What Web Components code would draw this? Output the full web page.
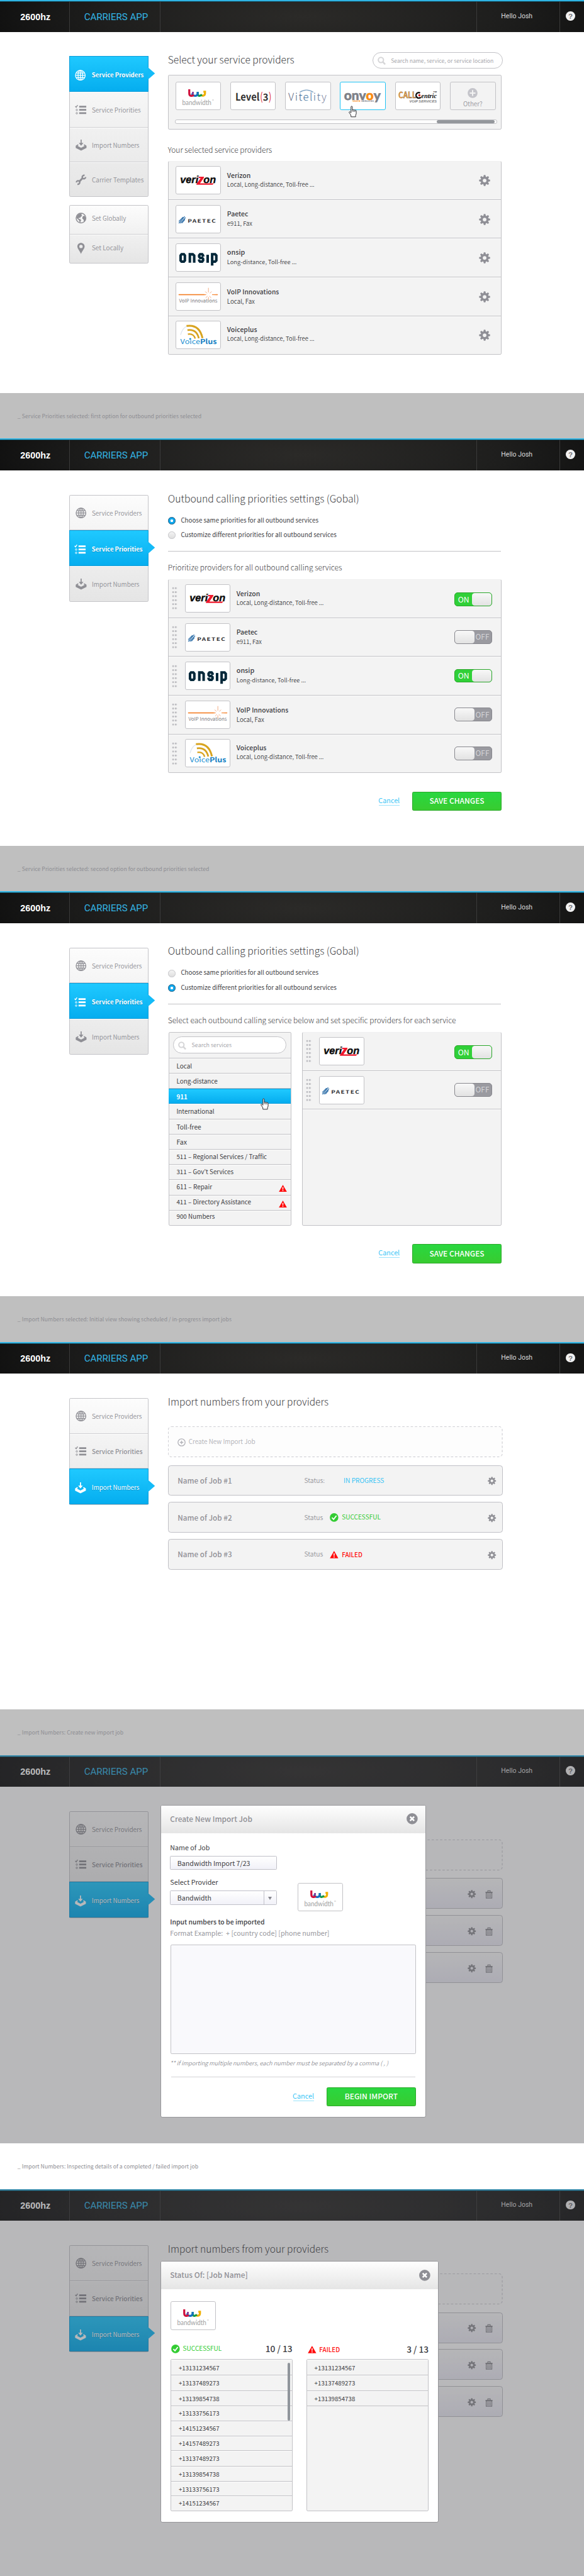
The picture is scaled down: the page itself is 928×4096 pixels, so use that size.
<!DOCTYPE html>
<html lang="en">
<head>
<meta charset="utf-8">
<title>2600hz Carriers App</title>
<style>
html{margin:0;background:#fff;overflow:hidden}
body{margin:0;width:928px;height:4096px;overflow:hidden;font:10px/20px "Noto Sans CJK SC","Noto Sans",sans-serif;color:#3c3c42;background:#fff}
</style>
</head>
<body>
<app-board></app-board>
<script>
const define = (name, render, setup) => customElements.define(name, class extends HTMLElement {
  connectedCallback() {
    if (this.shadowRoot) return;
    this.attachShadow({mode: 'open'}).innerHTML = render(n => this.getAttribute(n), this);
    if (setup) setup(this);
  }
});

/* A label set to a given width; its baseline is always 14.36px under its top. */
define('ui-text', a => `<style>
:host{display:block;flex:none;box-sizing:content-box;width:${a('w')}px;height:20px;font-size:10px;line-height:20px;white-space:nowrap;${a('b') ? `margin-top:${a('b') - 14.36}px;` : ''}}
span{display:inline-block;line-height:0;font-size:20px;margin-left:-.6px;${a('face') === 'h' ? 'font-family:"Liberation Sans",Arial,sans-serif' : a('face') === 'r' ? 'font-family:Roboto,"Liberation Sans",sans-serif' : ''}}
:host([u]) i{display:block;height:1.4px;background:#9be3fb;margin-top:-2.4px}
</style><span><slot></slot></span>${a('u') === null ? '' : '<i></i>'}`, el => {
  const s = el.shadowRoot.querySelector('span'), w = +el.getAttribute('w'), goal = w + 1.2;
  const now = () => s.getBoundingClientRect().width / el.getBoundingClientRect().width * w;
  s.style.fontSize = 20 * goal / now() + 'px';
  s.style.letterSpacing = (goal - now()) / el.textContent.length + 'px';
});
const T = (t, w, css = '', attrs = '') => `<ui-text w="${w}" style="${css}" ${attrs}>${t}</ui-text>`;

const ICONS = {
  globe: '<g fill="none" stroke="currentColor" stroke-width="1.9"><circle cx="13" cy="13" r="11.600"/><ellipse cx="13" cy="13" rx="5.500" ry="11.600"/><path d="M13 2v22M2 13h22M3.500 7.500h19M3.500 18.500h19"/></g>',
  list: '<g fill="currentColor"><path d="M8.700 3.400H25.500v4H8.700zM8.700 11H25.500v4H8.700zM8.700 18.800H25.500v4H8.700z"/></g><g fill="none" stroke="currentColor" stroke-width="1.300"><path d="M-.6 4.200l2.200 2.600L5 1.600" stroke-width="2"/><circle cx="3" cy="13.200" r="1.900"/><circle cx="3" cy="21" r="1.900"/></g>',
  import: '<path fill="currentColor" d="M12 0h2.600v8h4.200L13.300 14.400 7.800 8H12zM5.500 11.300L.5 14.500v5.200L13.300 26l12.800-6.300v-5.200l-5-3.200-1.900 1.900 2.600 1.900-8.500 4.400-8.500-4.400 2.600-1.900z"/>',
  wrench: '<path fill="none" stroke="currentColor" stroke-width="4.600" d="M8.500 18L17.500 8.500"/><path fill="none" stroke="currentColor" stroke-width="3.600" d="M21.500 2.200c-3.500.2-6 2.500-5.500 5.300.3 2.300 2.500 3.700 4.600 3.300 2-.4 3.200-1.600 3.500-3.800M4.500 24c3.400 0 5.800-2.400 5.400-5.200-.4-2.300-2.500-3.600-4.600-3.200-2 .4-3 1.700-3.300 3.800"/>',
  earth: '<circle cx="13" cy="13" r="11.600" fill="none" stroke="currentColor" stroke-width="2.200"/><path fill="currentColor" d="M4.500 6.500C8 2 13 2 15.500 3l-2 2.500 2.500 1.300-2.500 3-2.200 1 .4 2.700-3.500-1.500-1 2.500 3.500.7 3 2.800-1.700 2.700-.7 3.500c-2-1.500-2.300-3.500-3-6L4 14.500l-2-3zM17 9.500l4-2.500 3 5-.7 6-3 3.500-1.500-5-3-2.500z"/>',
  pin: '<path fill="currentColor" fill-rule="evenodd" d="M13 .2c-4.800 0-8.600 3.600-8.600 8.300C4.400 14 9.500 18 13 26.500 16.500 18 21.600 14 21.600 8.500c0-4.700-3.800-8.300-8.600-8.300zm0 4.600a4 4 0 1 1 0 8 4 4 0 0 1 0-8z"/>',
  gear: `<g fill="currentColor">${[0, 45, 90, 135].map(r => `<path transform="rotate(${r} 13 13)" d="M9.800 6l1.400-5.500h3.600L16.200 6zM9.800 20l1.400 5.500h3.600L16.200 20z"/>`).join('')}</g><circle cx="13" cy="13" r="6.500" fill="none" stroke="currentColor" stroke-width="4.600"/>`,
  trash: '<path fill="none" stroke="currentColor" stroke-width="2.400" d="M9.500 6V2.500h7V6M4.800 9h16.400v15.300H4.800z"/><path fill="currentColor" d="M2.800 5.500h20.400v3.800H2.800zM8 11.500h2V22H8zM12 11.500h2V22h-2zM16 11.500h2V22h-2z"/>',
  search: '<g fill="none" stroke="currentColor"><circle cx="10.500" cy="10.500" r="8.200" stroke-width="4"/><path d="M16.500 16.500l7.500 8" stroke-width="5"/></g>',
  close: '<circle cx="13" cy="13" r="12.900" fill="currentColor"/><path d="M8.300 8.300l9.400 9.400M17.700 8.300l-9.400 9.400" stroke="#fff" stroke-width="3.800"/>',
  check: '<circle cx="13" cy="13" r="12.800" fill="#33cc33"/><path d="M6.500 13.500l5 5 8.500-11" fill="none" stroke="#fff" stroke-width="3.400"/>',
  warn: '<path d="M13 2l12.600 22H.4z" fill="#ff0a0a"/><path d="M11.300 9.500h3.400l-.6 7.500h-2.200zM11.500 18.500h3v3h-3z" fill="#fff"/>',
  plus: '<circle cx="13" cy="13" r="12.800" fill="currentColor"/><path d="M13 5.500v15M5.500 13h15" stroke="#f3f3f3" stroke-width="3.200"/>',
  addring: '<circle cx="13" cy="13" r="11.300" fill="none" stroke="currentColor" stroke-width="2.600"/><path d="M13 7.500v11M7.500 13h11" stroke="currentColor" stroke-width="2.600"/>',
  hand: '<path fill="#fff" stroke="#222226" stroke-width="1.300" stroke-linejoin="round" d="M8.200 25L7.800 21 4 15.500c-1-1.500 1-2.700 2.200-1.500l1.900 2V2.800c0-2.100 3-2.100 3 0V10c0-1.500 2.800-1.500 2.900.2 0-1.400 2.700-1.300 2.900.5.300-1.200 2.900-1 2.900 1v6.500L18.400 21.500V25z"/><path d="M11.100 10v3.500M14 10.500V14M16.900 11v3.200" stroke="#222226" stroke-width="1.100"/>'
};
define('app-icon', a => `<style>:host{display:block;flex:none;width:${a('size') || 26}px;height:${a('size') || 26}px}svg{display:block;width:100%;height:100%;overflow:visible}</style><svg viewBox="0 0 26 26">${ICONS[a('name')]}</svg>`);
const I = (n, size = 26, css = '') => `<app-icon name="${n}" size="${size}" style="${css}"></app-icon>`;

const st = (x, y, w, size, fill, extra, t) => `<text x="${x}" y="${y}" textLength="${w}" lengthAdjust="spacingAndGlyphs" font-size="${size}" fill="${fill}" ${extra}>${t}</text>`;
const LOGOS = {
  bandwidth: `<g fill="none" stroke-width="4.400"><path d="M61 22h3.500v3c0 5.500-6 7.500-9.500 3.500" stroke="#f0b000"/><path d="M48.500 22v3c0 7.500 6 7 9 3" stroke="#159a48"/><path d="M36 25.500c1 5 5 5.500 7.500 5.300 3.500-.3 5-3.300 5-6V22" stroke="#1470c0"/><path d="M38 22v5" stroke="#7a2a90" stroke-width="3.600"/><path d="M30 16.500v9c0 7 7.500 6.500 9.500 3" stroke="#d0103c"/></g>` + st(14.5, 51, 64, 16, '#a0a0a0', 'font-family="Lato"', 'bandwidth') + '<path d="M80 40h4" stroke="#aaa"/>',
  level3: st(11, 41, 53, 23, '#303030', 'font-weight="700"', 'Level') + st(65, 42, 6, 24, '#e03038', '', '(') + st(71.5, 41, 12, 21, '#303030', 'font-weight="700"', '3') + st(84, 42, 6, 24, '#e03038', '', ')'),
  vitelity: st(7, 41, 86, 23, 'url(#v)', 'font-weight="300" letter-spacing="2"', 'Vitelity') + '<path d="M32 23q15-10 30 0" fill="none" stroke="#7fa3c4" stroke-width="1.800"/>',
  onvoy: st(8, 39.800, 80, 29, '#7d8088', 'font-weight="900" font-family="Lato" stroke="#7d8088" stroke-width=".8"', 'onv<tspan fill="#f98b10" stroke="#f98b10">o</tspan>y') + st(26.5, 44.300, 47, 4.600, '#7d8088', 'font-weight="700"', '<tspan fill="#f98b10">VOICE</tspan> SERVICES'),
  callcentric: st(7, 36.500, 39, 19, '#f0a040', 'font-weight="700" stroke="#555" stroke-width=".5"', 'CALL') + '<path d="M54.500 24.500a6 6 0 1 0 1.500 9.500" fill="none" stroke="#111" stroke-width="3.200"/><circle cx="53" cy="29.800" r="2.400" fill="#d01818"/>' + st(57, 36.300, 34, 15, '#111', 'font-weight="700" font-style="italic" font-family="Liberation Serif"', 'entric') + st(31, 46, 60, 7.500, '#77777a', 'font-weight="700" font-style="italic" font-family="Liberation Sans"', 'VOIP SERVICES') + st(83, 23, 8, 4, '#222', 'font-weight="700" font-family="Liberation Sans"', 'TM'),
  verizon: st(10, 36.700, 78.500, 22.500, '#0a0a0a', 'font-weight="700" font-style="italic" font-family="Liberation Sans" stroke="#0a0a0a" stroke-width=".5"', 'veri<tspan fill="none" stroke="none">z</tspan>on') + '<path d="M51 23.500H62.500l-1 3L53.500 38H84l-3 3H45.500l1-3 8.500-11.500h-5z" fill="#f0182c"/>',
  paetec: '<path d="M7 36l9.500-9.500M7.200 40L20 25M10.500 40L22 27.500M14 39.500l6.500-8" stroke="#2d6ea8" stroke-width="1.700"/>' + st(26.500, 38.500, 63.500, 10.500, '#2c2c30', 'font-weight="700" letter-spacing="1.500"', 'PAETEC'),
  onsip: '<g fill="none" stroke="#04283a" stroke-width="5.600"><path d="M11 26.500l2.200-2.700h5l2.200 2.700v11L18.200 40h-5L11 37.500z"/><path d="M31.300 42.500V24h6.500l3 2.700v15.800"/><path d="M60.300 29v-2.500l-2-2.700h-4.600l-2 2.500v3l2 2.300h4.600l2 2.400v3.300l-2 2.700h-4.600l-2-2.500V35"/><path d="M70.300 42.500V25"/><path d="M80.200 48.600V23.800h6.500l2.600 2.700v11L86.800 40h-6"/></g>',
  voip: st(7.5, 44.300, 84, 11, '#707074', 'font-weight="350"', 'VoIP Innovations') + '<path d="M7 26.300h55l5 .7-5 .7H7z" fill="#f47b20" stroke="#f47b20" stroke-width=".8"/><path d="M80 27l12-.6v1.200z" fill="#f47b20" stroke="#f47b20"/><path d="M72 12v10M72 32v7M65 20l4 4M79 20l-4 4M66 34l4-4M78 34l-4-4" stroke="#f4a070" stroke-width="1.200"/>',
  voiceplus: '<g fill="none"><path d="M11 31Q15 16 25 12" stroke="#dfe7ef" stroke-width="2"/><path d="M24 11.500Q52 7 59 38" stroke="#d8a420" stroke-width="4.200"/><path d="M26 20.500Q46 17.500 51 38.500" stroke="#d8a420" stroke-width="3.800"/><path d="M27 29.500Q39 27 43 39" stroke="#d8a420" stroke-width="3.200"/></g><circle cx="32" cy="40" r="2" fill="#1a8fd0"/>' + st(10.500, 51.500, 80, 15, '#1a90d2', '', 'Voice<tspan font-weight="700" fill="#1280c4">Plus</tspan>')
};
define('provider-logo', a => `<style>:host{display:block;flex:none;box-sizing:border-box;width:100px;height:62.500px;border:1px solid #c2c2c6;border-radius:4px;background:#fff;position:relative}
:host([hot]){border-color:#1fc3f5}svg{position:absolute;left:-1px;top:-1px;width:100px;height:62.500px;overflow:visible}text{font-family:"Noto Sans CJK SC",sans-serif;text-rendering:geometricPrecision}</style>
<svg viewBox="0 0 100 62.500"><defs><linearGradient id="v"><stop stop-color="#6a6a7e"/><stop offset=".45" stop-color="#2f6698"/><stop offset="1" stop-color="#8a8aa0"/></linearGradient></defs>${LOGOS[a('name')].replace(/ font-family="(\w+) ?(\w*)"/g, (m, p, q) => ` style="font-family:'${(p + ' ' + q).trim()}'"`)}</svg><slot></slot>`);
const L = (n, css = '', attr = '', inner = '') => `<provider-logo name="${n}" style="${css}" ${attr}>${inner}</provider-logo>`;

define('app-header', a => `<style>
:host{display:grid;grid-template-columns:153px 198.500px 1fr 181px 53px;height:70px;box-sizing:border-box;border-top:3px solid #2fb4e4;
background:radial-gradient(ellipse 62% 260% at 52% 50%,#2b2a28,#1e1e1d 55%,#0b0b0b)}
div{border-right:1px solid #3a3a3a;box-shadow:inset 0 1px #0f4f63;display:flex;align-items:flex-start;color:#fff}
div:first-child{margin-bottom:2px}div:last-child{border:0}
b{display:block;width:20.500px;height:20.500px;border-radius:50%;background:#f2f2f2;margin:22px 0 0 13px;text-align:center;font:700 16px/21px "Liberation Sans",sans-serif;color:#77777c}
</style><div>${T('2600hz', 65, 'font-weight:700;margin-left:45px', 'face="h" b="41.300"')}</div>
<div>${T('CARRIERS APP', 139, 'color:#33b5e5;font-weight:400;margin-left:32px', 'face="r" b="41.300"')}</div><div></div>
<div>${T('Hello Josh', 67.5, 'color:#dadada;font-weight:400;margin-left:53px', 'face="r" b="37.300"')}</div><div><b>?</b></div>`);

define('side-item', a => `<style>
:host{display:flex;align-items:flex-start;position:relative;box-sizing:border-box;height:${a('h')}px;color:#8f8f95;box-shadow:inset 0 1px #fff;border-bottom:1px solid #cfcfd2}
:host(:last-child){border-bottom:0}:host(:first-child){box-shadow:none}
:host([active]){color:#fff;background:linear-gradient(#1fc9ff,#05adef);border:1px solid #0e9cd8;box-shadow:none;margin:0 -1px;z-index:1}
:host([active]) ui-text{text-shadow:0 1px #0b90c8}
svg{position:absolute;left:100%;top:50%;margin:-15px 0 0 -.5px;width:16px;height:27px}
</style>${I(a('icon'), 24, `margin:${a('b') - 18}px 13px 0 ${a('active') === null ? 11.5 : 11}px`)}${T(a('label'), a('w'), `margin-top:${a('b') - 14.36}px;font-weight:${a('wt') || 350}`)}
${a('active') === null ? '' : '<svg viewBox="0 0 16 27"><path d="M0 0L15.500 13.500 0 27z" fill="#14bbf8"/></svg>'}`);
define('side-menu', () => `<style>:host{display:block;box-sizing:border-box;width:174px;border:1px solid #c4c4c8;border-radius:3px;background:linear-gradient(#fcfcfc,#e5e5e5)}div{margin:-1px 0}</style><div><slot></slot></div>`);
const item = (icon, label, w, h, b, extra = '') => `<side-item icon="${icon}" label="${label}" w="${w}" h="${h}" b="${b}" ${extra}></side-item>`;
const menuA = active => `<side-menu>
${item('globe', 'Service Providers', 108.5, active === 2 ? 78 : 79, 46)}
${item('list', 'Service Priorities', 110, active === 2 ? 78 : 76, active === 2 ? 46 : 44.3, active === 2 ? 'active wt="700"' : 'wt="500"')}
${item('import', 'Import Numbers', 103, 78.5, 46, active === 3 ? 'active wt="400"' : '')}</side-menu>`;

define('on-off', a => `<style>
:host{display:flex;flex:none;box-sizing:border-box;width:82px;height:30px;border:1px solid #2aa52a;border-radius:7px;background:#30d038;color:#fff}
:host([off]){background:#9a9aa0;border-color:#88888e;color:#d4d4d8;flex-direction:row-reverse}
i{display:block;width:42px;border-radius:6px;background:linear-gradient(#f8f8f8,#e2e2e2);margin-left:auto}
:host([off]) i{margin:0 auto 0 0}
</style>${a('off') === null ? T('ON', 23.5, 'margin-left:7px', 'b="20.500"') : T('OFF', 29, 'margin-right:5px', 'b="20.500"')}<i></i>`);

define('drag-dots', () => `<style>:host{display:block;flex:none;width:11.600px;height:52.800px;background:radial-gradient(circle,#bebec2 1.900px,transparent 2.500px) 0 0/5.800px 8.800px repeat}</style>`);

const P = [['verizon', 'Verizon', 50.5, 'Local, Long-distance, Toll-free ...', 190, 11, 37], ['paetec', 'Paetec', 45, 'e911, Fax', 54, 11, 37.3],
  ['onsip', 'onsip', 38, 'Long-distance, Toll-free ...', 151, 10, 36.3], ['voip', 'VoIP Innovations', 112.5, 'Local, Fax', 59.5, 11, 38], ['voiceplus', 'Voiceplus', 64.5, 'Local, Long-distance, Toll-free ...', 190, 10, 35]];
define('provider-row', a => {
  const [k, n, w, s, sw, ty, b] = P[+a('p')], mode = a('toggle');
  return `<style>:host{display:flex;align-items:flex-start;box-sizing:border-box;height:85px;border-bottom:1px solid #c2c2c6;box-shadow:inset 0 1px #fff}
:host([last]){border-bottom:0}.t{margin-left:14px}app-icon{margin:30px 24px 0 auto;color:#8f8f96}on-off{margin-left:auto;margin-right:20px}.g{width:14.500px}drag-dots{margin:15.500px 14.500px 0 7px}</style>
${mode === null ? '<i class="g"></i>' : '<drag-dots></drag-dots>'}
${L(k, `margin:${ty}px 0 0 ${mode === null ? 0 : 2}px`)}
${a('bare') === null ? `<div class="t">${T(n, w, `font-weight:500;margin-top:${b - 14.36}px`)}${T(s, sw, 'font-weight:350')}</div>` : ''}
${mode === null ? I('gear', 25) : `<on-off ${mode === 'off' ? 'off' : ''} style="margin-top:${+a('p') === 0 ? 29 : 26.500}px"></on-off>`}`;
});
define('ui-panel', () => `<style>:host{display:block;box-sizing:border-box;border:1px solid #c2c2c6;border-radius:3px;background:#f3f3f3}div{margin:-1px 0}</style><div><slot></slot></div>`);

define('search-box', a => `<style>:host{display:flex;flex:none;box-sizing:border-box;height:37px;border:1px solid #c2c2c6;border-radius:19px;background:#fff;color:#a6a6ab}app-icon{color:#d6d6d8;margin:9px 12px 0 10px}</style>${I('search', 18)}${T(a('label'), a('w'), '', 'b="22.700"')}`);

define('green-button', a => `<style>:host{display:flex;flex:none;box-sizing:border-box;width:196px;height:42px;border:1px solid #2aa828;border-radius:3px;background:linear-gradient(#29d740,#38cc30);color:#fff;justify-content:center}</style>${T(a('label'), a('w'), 'font-weight:500', 'b="26"')}`);
define('action-bar', a => `<style>:host{display:flex;justify-content:flex-end}green-button{margin-left:28px}</style>${T('Cancel', 45.5, 'color:#1fc0f5;font-weight:350', `u b="${a('b')}"`)}<green-button label="${a('label')}" w="${a('w')}"></green-button>`);

define('radio-row', a => `<style>:host{display:flex;height:32px}i{display:block;box-sizing:border-box;width:16px;height:16px;border-radius:50%;border:1px solid #c4c4c8;background:linear-gradient(#f4f4f4,#dedede);margin-right:12.500px}
:host([on]) i{border:1px solid #14567a;background:radial-gradient(circle,#fff 2.600px,#0fa8ee 3.400px)}</style><i></i>${T(a('label'), a('w'), '', 'b="12.300"')}`);
define('settings-head', a => `<style>:host{display:block}.r{margin-top:26.200px}hr{border:0;height:1px;background:#c2c2c6;margin:10.500px 2px 0 0}</style>
${T('Outbound calling priorities settings (Gobal)', 418, 'font-weight:300', 'b="70"')}
<div class="r"><radio-row label="Choose same priorities for all outbound services" w="300.500" ${a('pick') === '1' ? 'on' : ''}></radio-row><radio-row label="Customize different priorities for all outbound services" w="340" ${a('pick') === '2' ? 'on' : ''}></radio-row></div><hr>`);

define('status-mark', a => `<style>:host{display:flex;align-items:flex-start}app-icon{margin-right:7.500px}</style>${a('kind') === 'ok' ? I('check', 19) + T('SUCCESSFUL', 84, 'color:#33cc33;font-weight:400', 'b="15"') : I('warn', 19, 'margin-top:-1px') + T('FAILED', 44, 'color:#ff0a0a;font-weight:500', 'b="14.500"')}`);

define('new-job', a => `<style>:host{display:flex;position:relative;box-sizing:border-box;width:733px;height:67.500px;border-radius:7px;color:#b0b0b6;background:#fdfdfd}svg{position:absolute;inset:0;width:733px;height:67.500px}app-icon{margin:25.500px 7px 0 20.500px}</style>
<svg><rect x=".5" y=".5" width="732" height="66.500" rx="7" fill="none" stroke="#c0c0c6" stroke-width="1.200" stroke-dasharray="5 4.200"/></svg>${a('blank') === null ? I('addring', 18) + T('Create New Import Job', 145, 'font-weight:350', 'b="39.500"') : ''}`);
define('job-card', a => {
  const n = +a('n'), dy = n === 1 ? 0 : -1, bin = a('bin') !== null;
  return `<style>:host{display:flex;align-items:flex-start;box-sizing:border-box;width:733px;height:67.500px;margin-top:13.700px;border:1px solid #c0c0c6;border-radius:6px;background:#f3f3f3;color:#919197}
:host([bin]){background:linear-gradient(#fbfbfb,#edecf6)}.n{box-sizing:border-box;width:297.500px;padding-left:20px}.s{width:${n === 1 ? 86.5 : 56}px}.g{margin:24px 13px 0 auto}:host([bin]) .g{margin:24px 18px 0 auto;display:flex;gap:19px}status-mark{margin-top:${n === 2 ? 22.7 : 24}px}</style>
${bin ? '' : `<div class="n">${T('Name of Job #' + n, 118, 'font-weight:500;margin-top:' + (40.5 + dy - 14.36) + 'px')}</div>
<div class="s">${T(n === 1 ? 'Status:' : 'Status', n === 1 ? 44 : 40, 'font-weight:350;margin-top:' + (38 - 14.36) + 'px')}</div>
${n === 1 ? T('IN PROGRESS', 87.5, 'color:#1fc0f5;font-weight:350', 'b="38"') : `<status-mark kind="${n === 2 ? 'ok' : 'bad'}"></status-mark>`}`}
<div class="g">${I('gear', 18.5)}${bin ? I('trash', 19.5) : ''}</div>`;
});

define('ui-dialog', a => `<style>
:host{display:block;position:absolute;left:352px;box-sizing:border-box;width:${a('w')}px;height:${a('h')}px;top:${a('y')}px;border:1px solid #96969a;border-radius:4px;background:#fff;overflow:hidden}
header{display:flex;height:61px;background:linear-gradient(#fefefe,#e5e5e5);color:#8f8f95;justify-content:space-between;padding:0 17.500px 0 20px}app-icon{margin-top:17.500px}section{padding:0 20px}</style>
<header>${T(a('label'), a('lw'), 'font-weight:500', 'b="36.700"')}${I('close', 24.5)}</header><section><slot></slot></section>`);

define('field-box', a => `<style>:host{display:flex;box-sizing:border-box;width:234.500px;height:30.500px;border:1px solid #c0c0c8;border-radius:2px;background:linear-gradient(#fff,#f1f1f8);margin-left:-.500px}i{display:block;margin-left:auto;width:26px;border-left:1px solid #c0c0c8}i:after{content:"";display:block;width:0;height:0;margin:12px 0 0 8px;border:4.500px solid transparent;border-top:7px solid #85858c;border-bottom:0}</style>
${T(a('value'), a('vw'), 'margin-left:15px', 'b="20.200"')}${a('pick') === null ? '' : '<i></i>'}`);

define('number-list', a => {
  const rows = a('rows').split(' ').map(r => r.split(':'));
  return `<style>:host{display:block;position:relative;box-sizing:border-box;width:268px;height:333px;border:1px solid #c2c2c6;border-radius:3px;background:#f3f3f3}
div{box-sizing:border-box;border-bottom:1px solid #c2c2c6;box-shadow:inset 0 1px #fff;padding-left:17px;display:flex}div:first-of-type{margin-top:-1px}div:nth-of-type(10){border:0}
i{position:absolute;right:4px;top:6px;width:6.500px;height:127px;border-radius:3px;background:#90959b}</style>
${rows.map(([t, h, b]) => `<div style="height:${h}px">${T(t, 88, '', `b="${b}"`)}</div>`).join('')}${a('bar') === null ? '' : '<i></i>'}`;
});

define('service-list', () => {
  const rows = [['Local', 33, 33, 22.7], ['Long-distance', 89, 33.5, 23], ['911', 23, 34, 22.5], ['International', 82, 33.5, 22.3], ['Toll-free', 53, 33, 22.6], ['Fax', 22, 33, 22.6], ['511 – Regional Services / Traffic', 197, 34, 21.6], ['311 – Gov’t Services', 124, 33, 20.7], ['611 – Repair', 77, 34, 21.7], ['411 – Directory Assistance', 162.5, 33, 20.7], ['900 Numbers', 83, 33, 18.6]];
  return `<style>:host{display:block}.q{height:57.300px;box-sizing:border-box;padding:10px 8.500px;border-bottom:1px solid #c2c2c6}
.r{display:flex;position:relative;box-sizing:border-box;border-bottom:1px solid #c2c2c6;box-shadow:inset 0 1px #fff;padding-left:16.500px}.r:last-child{border:0}
.on{background:linear-gradient(#1fc9ff,#05adef);border:0;box-shadow:none;border-top:1px solid #0e9cd8;border-bottom:1px solid #0e9cd8;margin:0 -1px;padding-left:17.500px;color:#fff;font-weight:700}
.w{margin:9.500px 8px 0 auto}.h{position:absolute;left:199px;top:19px;z-index:2}</style>
<div class="q"><search-box label="Search services" w="86.500"></search-box></div>
${rows.map(([t, w, h, b], i) => `<div class="r ${i === 2 ? 'on' : ''}" style="height:${h}px">${T(t, w, i === 7 ? "font-family:'Noto Sans CJK KR',sans-serif" : '', `b="${b}"`)}${i === 8 || i === 9 ? `<span class="w">${I('warn', 18)}</span>` : ''}${i === 2 ? `<span class="h">${I('hand', 25.5)}</span>` : ''}</div>`).join('')}`;
});

define('app-screen', a => `<style>
:host{display:block;position:relative;height:${a('h')}px;background:#fff;overflow:hidden}
.b{display:flex;isolation:isolate}nav{flex:none;width:174px;margin:53px 42.500px 0 152px;position:relative}main{width:731px}
.veil{position:absolute;inset:1px 0 0;background:rgba(68,68,73,.38)}</style>
<app-header></app-header><div class="b"><nav><slot name="nav"></slot></nav><main><slot></slot></main></div>
${a('dim') === null ? '' : '<div class="veil"></div>'}<slot name="dialog"></slot>`);
define('strip-note', a => `<style>:host{display:block;height:100px;background:${a('bg') || '#bfbfbf'};color:#8e8e93;overflow:hidden}</style>${T(a('label'), a('w'), 'margin-left:39px;font-weight:400', 'b="55.300"')}`);

const importTitle = T('Import numbers from your providers', 351, 'font-weight:300', 'b="70.700"');
const importBack = title => `<div slot="nav">${menuA(3)}</div>
<div>${title}<new-job blank style="margin-top:39px"></new-job><div style="height:3.700px"></div>
<job-card n="1" bin></job-card><job-card n="2" bin></job-card><job-card n="3" bin></job-card></div>`;

define('app-board', () => `<style>
:host{display:block;width:1280px;height:5649px;overflow:hidden;zoom:.725}.top{display:flex;justify-content:space-between;height:94px;margin-right:-3px}.tiles{display:flex;gap:20.400px;padding:15px 0 0 14.500px}
.other{box-sizing:border-box;width:100px;height:62.500px;border:1px solid #c2c2c6;border-radius:4px;color:#c4c4ca;display:flex;flex-direction:column;align-items:center}
.bar{box-sizing:border-box;margin:20px 9px 0 13px;height:10.500px;border:1px solid #c2c2c6;border-radius:4px;background:#fdfdfd;display:flex;justify-content:flex-end;padding:.500px 4px .500px 0}.bar i{width:127px;border-radius:4px;background:#94979c}
.hand{position:absolute;left:14px;top:51px;z-index:2}
.cols{display:flex;justify-content:space-between}.row{display:flex}
</style>
<app-screen h="862"><div slot="nav"><side-menu>${item('globe', 'Service Providers', 112.5, 78, 46, 'active wt="700"')}${item('list', 'Service Priorities', 106, 79, 46)}${item('import', 'Import Numbers', 103, 76, 44)}${item('wrench', 'Carrier Templates', 112.5, 75, 44)}</side-menu>
<side-menu style="margin-top:17.500px">${item('earth', 'Set Globally', 74, 64.5, 35)}${item('pin', 'Set Locally', 68, 63, 36)}</side-menu></div>
<div class="top">${T('Select your service providers', 276, 'font-weight:300', 'b="69.300"')}<search-box style="width:286.500px;margin-top:44px" label="Search name, service, or service location" w="224"></search-box></div>
<ui-panel style="height:119.700px"><div class="tiles">${L('bandwidth')}${L('level3')}${L('vitelity')}${L('onvoy', '', 'hot', `<span class="hand">${I('hand', 25.5)}</span>`)}${L('callcentric')}<div class="other">${I('plus', 22, 'margin-top:12px')}${T('Other?', 41, 'color:#96969c;font-weight:350;margin-top:5px')}</div></div><div class="bar"><i></i></div></ui-panel>
${T('Your selected service providers', 227, 'font-weight:300', 'b="52.500"')}
<ui-panel style="height:424.500px;margin-top:11.200px">${[0, 1, 2, 3, 4].map(i => `<provider-row p="${i}" ${i === 4 ? 'last' : ''}></provider-row>`).join('')}</ui-panel></app-screen>
<strip-note label="_ Service Priorities selected: first option for outbound priorities selected" w="402"></strip-note>

<app-screen h="893"><div slot="nav">${menuA(2)}</div><settings-head pick="1"></settings-head>
${T('Prioritize providers for all outbound calling services', 380.5, 'font-weight:300', 'b="42"')}
<ui-panel style="height:424.500px;margin-top:13.300px">${[0, 1, 2, 3, 4].map(i => `<provider-row p="${i}" toggle="${i % 2 || i === 4 ? 'off' : 'on'}" ${i === 4 ? 'last' : ''}></provider-row>`).join('')}</ui-panel>
<action-bar b="26" label="SAVE CHANGES" w="119" style="margin-top:41.300px"></action-bar></app-screen>
<strip-note label="_ Service Priorities selected: second option for outbound priorities selected" w="419"></strip-note>

<app-screen h="888"><div slot="nav">${menuA(2)}</div><settings-head pick="2"></settings-head>
${T('Select each outbound calling service below and set specific providers for each service', 630, 'font-weight:300', 'b="42"')}
<div class="cols" style="margin-top:13.300px"><ui-panel style="width:268.500px;height:424.500px;margin-left:1px"><service-list></service-list></ui-panel>
<ui-panel style="width:437px;height:424.500px"><provider-row p="0" bare toggle="on"></provider-row><provider-row p="1" bare toggle="off"></provider-row><div style="height:2px;background:linear-gradient(#fff 50%,transparent 50%)"></div></ui-panel></div>
<action-bar b="25" label="SAVE CHANGES" w="119" style="margin-top:41.300px"></action-bar></app-screen>
<strip-note label="_ Import Numbers selected: Initial view showing scheduled / in-progress import jobs" w="468"></strip-note>

<app-screen h="806"><div slot="nav">${menuA(3)}</div>
${importTitle}<new-job style="margin-top:39px"></new-job><div style="height:3.700px"></div>
<job-card n="1"></job-card><job-card n="2"></job-card><job-card n="3"></job-card></app-screen>
<strip-note label="_ Import Numbers: Create new import job" w="231"></strip-note>

<app-screen h="852" dim>${importBack('<div style="height:76.340px"></div>')}
<ui-dialog slot="dialog" y="109.300" w="582" h="686" label="Create New Import Job" lw="179">
${T('Name of Job', 86, '', 'b="37.500"')}<field-box style="margin-top:7px" value="Bandwidth Import 7/23" vw="158.500"></field-box>
<div class="row"><div>${T('Select Provider', 104, '', 'b="33"')}<field-box style="margin-top:7px" pick value="Bandwidth" vw="73.500"></field-box></div>${L('bandwidth', 'margin:28.500px 0 0 45px')}</div>
${T('Input numbers to be imported', 206, 'margin-top:14.700px;font-weight:500')}${T('Format Example:&nbsp; + [country code] [phone number]', 348, 'color:#96969c;margin-top:5.300px')}
<div style="box-sizing:border-box;width:538px;height:240.500px;margin:12.500px 0 0 .500px;border:1px solid #c2c2c6;border-radius:3px;background:#f9f9fc"></div>
${T('** if importing multiple numbers, each number must be separated by a comma ( , )', 477, 'color:#8e8e94;font-style:italic;font-weight:350', 'b="24.500"')}
<div style="height:1px;margin:19.500px 2px 0;background:#d4d4d6"></div>
<action-bar b="26" label="BEGIN IMPORT" w="115" style="margin:21.500px 1px 0 0"></action-bar></ui-dialog></app-screen>
<strip-note bg="#fff" label="_ Import Numbers: Inspecting details of a completed / failed import job" w="395"></strip-note>

<app-screen h="849" dim>${importBack(importTitle)}
<ui-dialog slot="dialog" y="157.500" w="609.500" h="574" label="Status Of: [Job Name]" lw="169">
${L('bandwidth', 'margin-top:26.500px')}
<div class="row" style="height:64.500px"><status-mark kind="ok" style="width:207.500px;margin:32px 0 0 1.500px"></status-mark>${T('10 / 13', 58, 'font-weight:500', 'b="49"')}
<status-mark kind="bad" style="width:218px;margin:34.500px 0 0 33.500px"></status-mark>${T('3 / 13', 47, 'font-weight:500', 'b="51"')}</div>
<div class="row" style="gap:29.500px;margin-left:.500px"><number-list bar rows="+13131234567:35:25 +13137489273:34:23 +13139854738:33:22.700 +13133756173:34:22.500 +14151234567:32.700:21 +14157489273:32:21 +13137489273:34:23 +13139854738:33:23 +13133756173:32:23 +14151234567:33:21"></number-list>
<number-list rows="+13131234567:35:24 +13137489273:34:23 +13139854738:33:22.700"></number-list></div></ui-dialog></app-screen>`);
</script>
</body>
</html>
